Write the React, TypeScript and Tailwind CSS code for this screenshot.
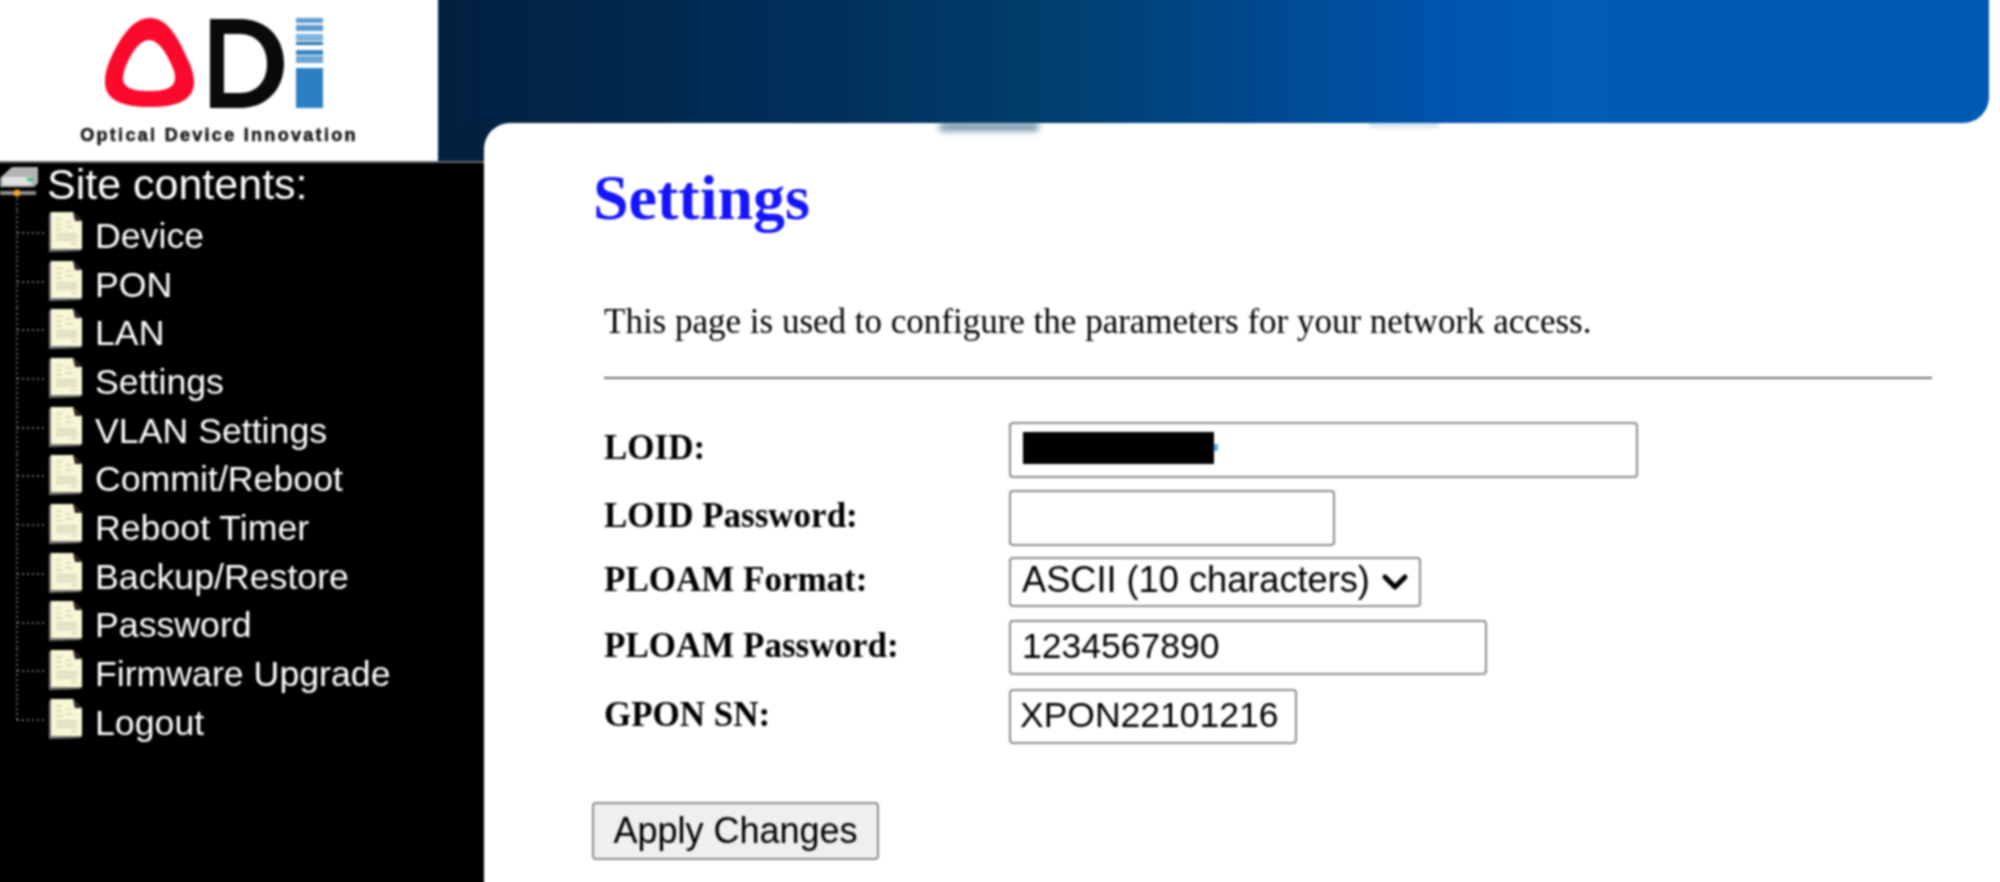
import { ChevronDown } from "lucide-react";

const menuItems = [
  "Device",
  "PON",
  "LAN",
  "Settings",
  "VLAN Settings",
  "Commit/Reboot",
  "Reboot Timer",
  "Backup/Restore",
  "Password",
  "Firmware Upgrade",
  "Logout",
];

const fieldClass =
  "h-full rounded-[4px] border-2 border-[#8c8c8c] bg-white px-[11px] font-['Liberation_Sans',Arial,sans-serif] text-[35.5px] text-black outline-none";

function Logo() {
  return (
    <div className="col-start-1 row-span-2 row-start-1 flex flex-col items-center bg-white pl-[4px] pt-[20px]">
      <svg width="230" height="95" viewBox="100 16 230 95" aria-label="ODI" className="ml-[-8px]">
        {/* rounded triangle */}
        <path
          fillRule="evenodd"
          fill="#fa0a2c"
          d="M150 18C131 18 118 42 110 60C106 69 105 76 105 82C105 100 122 107 150 107C178 107 194 100 194 82C194 76 192 68 188 60C180 42 169 18 150 18ZM149 40C139 40 130 56 126 66C124 71 123 75 123 78C123 88 133 91 149 91C165 91 175 88 175 78C175 74 174 70 172 66C168 56 159 40 149 40Z"
        />
        {/* D */}
        <path
          fillRule="evenodd"
          fill="#0a0a0a"
          d="M210 19H240C267 19 284 38 284 63C284 90 266 108 240 108H210ZM224 34V93H240C256 93 267 82 267 64C267 46 256 34 240 34Z"
        />
        {/* striped I */}
        <rect x="296" y="18" width="27" height="5" fill="#5f9dd2" />
        <rect x="296" y="25" width="27" height="6" fill="#5a99d0" />
        <rect x="296" y="34" width="27" height="7" fill="#7fb2de" />
        <rect x="296" y="42" width="27" height="3" fill="#2b72b0" />
        <rect x="296" y="50" width="27" height="5" fill="#3a84c4" />
        <rect x="296" y="56" width="27" height="7" fill="#6ba6d7" />
        <rect x="296" y="68" width="27" height="40" fill="#2b80c4" />
      </svg>
      <span className="mt-[14px] font-['Liberation_Sans',Arial,sans-serif] text-[18px] font-bold leading-[20px] tracking-[2.3px] text-[#1a1a1a] [-webkit-text-stroke:0.6px_#1a1a1a]">
        Optical Device Innovation
      </span>
    </div>
  );
}

function RootIcon() {
  return (
    <svg width="38" height="48" viewBox="0 0 38 48" className="shrink-0">
      <path d="M12 4H38V20L34 24H0V15Z" fill="#b4b4b4" />
      <path d="M3 14H31V22H3Z" fill="#e2e2e2" />
      <rect x="27" y="15" width="6" height="3" fill="#3cc47c" />
      <rect x="0" y="28" width="36" height="4" fill="#8d8d8d" />
      <circle cx="17" cy="30" r="3.5" fill="#f0a326" />
      <path d="M17 35V48" stroke="#8a8a8a" strokeWidth="1.5" strokeDasharray="2 3" />
    </svg>
  );
}

function PageIcon() {
  return (
    <svg width="33" height="41" viewBox="0 0 33 41" className="mb-[8px] shrink-0">
      <path d="M0 41V3L3 0V38H33V38L31 40Z" fill="#777" />
      <path d="M2 1H24L33 10V38H2Z" fill="#f7f7d6" />
      <path d="M24 1L33 10H26Z" fill="#222" />
      <path
        d="M7 8H13M7 13H12M17 11H22M7 18H13M17 16H24M7 23H28M7 26H28M7 29H28M22 33H28"
        stroke="#d0d0ba"
        strokeWidth="1.6"
      />
    </svg>
  );
}

function Connector({ last }: { last: boolean }) {
  return (
    <svg width="33" height="48.7" viewBox="0 0 33 48.7" className="shrink-0">
      <path
        d={last ? "M1 0V22M1 22H30" : "M1 0V48.7M1 22H30"}
        fill="none"
        stroke="#8a8a8a"
        strokeWidth="1.5"
        strokeDasharray="2 3"
      />
    </svg>
  );
}

function Sidebar() {
  return (
    <nav className="col-span-2 col-start-1 row-start-3 border-t-2 border-[#6a6a6a] bg-black pl-[4px] font-['Liberation_Sans',Arial,sans-serif] text-white">
      <div className="flex h-[48px] items-center">
        <RootIcon />
        <span className="mb-[5px] ml-[9px] text-[43px] leading-none">Site contents:</span>
      </div>
      <ul className="pl-[16px]">
        {menuItems.map((item, i) => (
          <li key={item} className="flex h-[48.7px] items-center">
            <Connector last={i === menuItems.length - 1} />
            <PageIcon />
            <span className="ml-[13px] pt-[3px] text-[35.7px] leading-none">{item}</span>
          </li>
        ))}
      </ul>
    </nav>
  );
}

function FormRow({
  label,
  height,
  children,
}: {
  label: string;
  height: string;
  children: React.ReactNode;
}) {
  return (
    <div className={`flex items-center ${height}`}>
      <label className="w-[405px] shrink-0 pb-[5px] text-[35px] font-bold leading-none text-black">{label}</label>
      {children}
    </div>
  );
}

function Content() {
  return (
    <main className="relative col-start-3 row-span-2 row-start-2 rounded-tl-[26px] bg-white pl-[109px] pr-[72px] pt-[38px] font-['Liberation_Serif','Times_New_Roman',serif]">
      {/* smudges left by the header in the photo */}
      <div className="absolute left-[455px] top-0 h-[8px] w-[100px] rounded-full bg-[#0c4468]/60 blur-[3px]" />
      <div className="absolute left-[885px] top-0 h-[4px] w-[70px] rounded-full bg-[#0b62b0]/25 blur-[2px]" />

      <h1 className="text-[64px] font-bold leading-[74px] text-[#1414ff]">Settings</h1>

      <div className="pl-[11px]">
        <p className="mt-[69px] text-[35px] leading-[36px] text-black">
          This page is used to configure the parameters for your network access.
        </p>
        <hr className="mt-[37px] border-t-2 border-[#707070]" />

        <div className="mt-[43px] flex flex-col">
          <FormRow label="LOID:" height="h-[56px]">
            <div className="relative h-full w-[629px]">
              <input readOnly value="" className={`w-full pb-[2px] ${fieldClass}`} />
              <div className="absolute left-[14px] top-[10px] h-[32px] w-[191px] bg-black" />
              <div className="absolute left-[205px] top-[22px] h-[7px] w-[4px] bg-[#58aef0]" />
            </div>
          </FormRow>
          <div className="mt-[12px]">
            <FormRow label="LOID Password:" height="h-[56px]">
              <input readOnly type="text" value="" className={`w-[326px] pb-[2px] ${fieldClass}`} />
            </FormRow>
          </div>
          <div className="mt-[11px]">
            <FormRow label="PLOAM Format:" height="h-[50px]">
              <div className="relative h-full w-[412px]">
                <select
                  defaultValue="ascii"
                  className="h-full w-full appearance-none rounded-[4px] border-2 border-[#8c8c8c] bg-white px-[11px] pb-[5px] font-['Liberation_Sans',Arial,sans-serif] text-[36.2px] leading-[40px] text-black outline-none"
                >
                  <option value="ascii">ASCII (10 characters)</option>
                  <option value="hex">HEX (20 characters)</option>
                </select>
                <ChevronDown
                  size={40}
                  strokeWidth={3}
                  className="pointer-events-none absolute right-[6px] top-[5px] text-black"
                />
              </div>
            </FormRow>
          </div>
          <div className="mt-[13px]">
            <FormRow label="PLOAM Password:" height="h-[55px]">
              <input readOnly value="1234567890" className={`w-[478px] pb-[2px] ${fieldClass}`} />
            </FormRow>
          </div>
          <div className="mt-[14px]">
            <FormRow label="GPON SN:" height="h-[55px]">
              <input readOnly value="XPON22101216" className={`w-[288px] pb-[2px] ${fieldClass} pl-[9px] pr-[9px]`} />
            </FormRow>
          </div>
        </div>
      </div>

      <button className="-ml-px mt-[58px] h-[58px] w-[287px] rounded-[4px] border-2 border-[#8c8c8c] bg-[#efefef] font-['Liberation_Sans',Arial,sans-serif] text-[36px] text-black">
        Apply Changes
      </button>
    </main>
  );
}

export default function App() {
  return (
    <div className="h-[882px] w-[2000px] overflow-hidden">
      {/* 4px overscan on every side so the soft blur does not fade at the window edge */}
      <div className="-m-[4px] grid h-[890px] w-[2008px] grid-cols-[442px_46px_1fr] grid-rows-[127px_38px_1fr] bg-white blur-[1px]">
        <Logo />
        {/* header band */}
        <div className="col-span-2 col-start-2 row-start-1 mr-[15px] rounded-br-[26px] bg-[linear-gradient(90deg,#03203f_0%,#00305c_25%,#003f6e_40%,#00488c_52%,#0054ad_65%,#005cb6_72%,#005ab5_100%)]" />
        <div className="col-span-2 col-start-2 row-start-2 bg-[#03203f]" />
        <Sidebar />
        <Content />
      </div>
    </div>
  );
}
